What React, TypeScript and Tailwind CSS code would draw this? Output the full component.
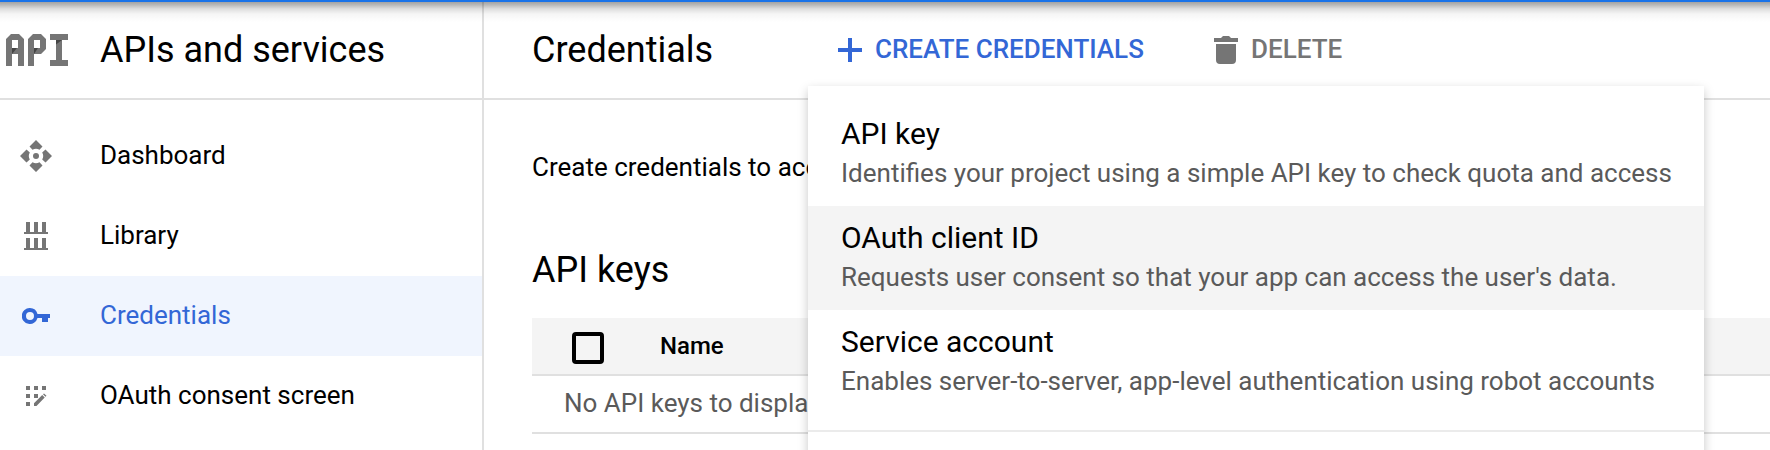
import type { ReactNode } from "react";

function ApiLogo() {
  return (
    <svg width="64" height="32" viewBox="0 0 64 32" className="mr-[30px] shrink-0" fill="#757575">
      <path fillRule="evenodd" d="M0 32V5L5 0h8l5 5v27h-6V20H6v12H0ZM6 6v8h6V6H6Z" />
      <path fillRule="evenodd" d="M22 32V5l5-5h8l5 5v10l-5 5h-7v12h-6ZM28 6v8h6V6h-6Z" />
      <path d="M44 0h18v6h-6v20h6v6H44v-6h6V6h-6V0Z" />
      <path d="M6 20v-6h5L6 20ZM28 20v-6h4L28 20ZM50 6h6l-6 4.500V6Z" fill="#454545" />
    </svg>
  );
}

function DashboardIcon() {
  return (
    <svg width="32" height="32" viewBox="0 0 32 32" fill="#757575">
      {[0, 90, 180, 270].map((angle) => (
        <path
          key={angle}
          transform={`rotate(${angle} 16 16)`}
          d="M16 0l6.500 6.500-3 3.300A7 7 0 0 0 12.500 9.800L9.500 6.500z"
        />
      ))}
      <circle cx="16" cy="16" r="3" />
    </svg>
  );
}

function LibraryIcon() {
  return (
    <svg width="24" height="28" viewBox="0 0 24 28" fill="#757575">
      <path d="M2 0h4v10h4V0h4v10h4V0h4v10h2v2H0v-2h2zM2 16h4v10h4V16h4v10h4V16h4v10h2v2H0v-2h2z" />
    </svg>
  );
}

function KeyIcon() {
  return (
    <svg width="28" height="16" viewBox="0 0 28 16" fill="#3367d6">
      <path fillRule="evenodd" d="M8 0a8 8 0 0 1 7.500 6H28v4h-2v4h-6v-4h-4.500A8 8 0 1 1 8 0Zm0 4a4 4 0 1 0 0 8 4 4 0 0 0 0-8Z" />
    </svg>
  );
}

function ConsentIcon() {
  return (
    <svg width="20" height="20" viewBox="0 0 20 20" className="overflow-visible" fill="#757575">
      <path d="M0 0h4v4H0zM8 0h4v4H8zM16 0h4v4h-4zM0 8h4v4H0zM8 8h4v4H8zM0 16h4v4H0z" />
      <path d="M8 20v-2.700l8.200-8.200 2.500 2.500L10.500 20zM17 8.300l1-.8 2.500 2.300-1 1z" />
    </svg>
  );
}

function TrashIcon() {
  return (
    <svg width="24" height="28" viewBox="0 0 24 28" fill="#757575">
      <path d="M0 2h7l2-2h6l2 2h7v4H0zM2 8h20v16a4 4 0 0 1-4 4H6a4 4 0 0 1-4-4z" />
    </svg>
  );
}

function NavItem({ icon, label, active = false }: { icon: ReactNode; label: string; active?: boolean }) {
  return (
    <a className={`flex h-20 items-center text-[26px] ${active ? "bg-[#f0f5fe] text-[#3367d6]" : "text-black"}`}>
      <span className="ml-4 mr-11 flex w-10 justify-center">{icon}</span>
      <span className="pb-0.5">{label}</span>
    </a>
  );
}

function MenuItem({ title, text, active = false }: { title: string; text: string; active?: boolean }) {
  return (
    <div className={`flex h-[104px] flex-col pt-3 pl-[33px] whitespace-nowrap ${active ? "bg-[#f4f4f4]" : ""}`}>
      <div className="text-[30px] leading-10 text-black">{title}</div>
      <div className="text-[26px] leading-[38px] text-[#5a5a5a]">{text}</div>
    </div>
  );
}

export default function App() {
  return (
    <div className="relative h-[450px] w-full overflow-hidden bg-white font-[Roboto,sans-serif] text-black">
      <div className="flex h-full pt-0.5">
        <aside className="flex w-[484px] shrink-0 flex-col border-r-2 border-[#e0e0e0]">
          <div className="flex h-[98px] items-center border-b-2 border-[#e0e0e0] pl-1.5">
            <ApiLogo />
            <h1 className="text-[36px] leading-none">APIs and services</h1>
          </div>
          <nav className="flex flex-col pt-4">
            <NavItem icon={<DashboardIcon />} label="Dashboard" />
            <NavItem icon={<LibraryIcon />} label="Library" />
            <NavItem icon={<KeyIcon />} label="Credentials" active />
            <NavItem icon={<ConsentIcon />} label="OAuth consent screen" />
          </nav>
        </aside>
        <main className="flex min-w-0 flex-1 flex-col">
          <header className="flex h-[98px] shrink-0 items-center border-b-2 border-[#e0e0e0] pl-12">
            <h2 className="w-[306px] text-[36px] leading-none">Credentials</h2>
            <button className="flex w-[376px] items-center gap-[13px] text-[26px] font-medium whitespace-nowrap text-[#3367d6]">
              <svg width="24" height="24" viewBox="0 0 24 24" fill="#3367d6">
                <path d="M10 0h4v10h10v4H14v10h-4V14H0v-4h10z" />
              </svg>
              <span className="pb-0.5">CREATE CREDENTIALS</span>
            </button>
            <button className="flex items-center gap-[13px] text-[26px] font-medium text-[#757575]">
              <TrashIcon />
              <span className="pb-0.5">DELETE</span>
            </button>
          </header>
          <section className="flex flex-col pl-12">
            <p className="pt-[47px] text-[26px] leading-10 whitespace-nowrap">Create credentials to acc</p>
            <h3 className="pt-[60px] text-[36px] leading-[46px]">API keys</h3>
            <div className="mt-[25px] flex h-[58px] items-center border-b-2 border-[#e0e0e0] bg-[#f4f4f4] pl-10">
              <span className="mt-1 size-8 rounded-[4px] border-4 border-black" />
              <span className="ml-14 text-[24px] font-medium">Name</span>
            </div>
            <div className="flex h-[58px] items-center border-b-2 border-[#e0e0e0] pb-0.5 pl-8 text-[26px] text-[#5a5a5a]">No API keys to display</div>
          </section>
        </main>
      </div>
      <div className="absolute top-[86px] left-[808px] h-[400px] w-[896px] bg-white pt-4 shadow-[0_4px_10px_rgba(0,0,0,0.22)]">
        <MenuItem title="API key" text="Identifies your project using a simple API key to check quota and access" />
        <MenuItem title="OAuth client ID" text="Requests user consent so that your app can access the user's data." active />
        <MenuItem title="Service account" text="Enables server-to-server, app-level authentication using robot accounts" />
        <div className="mt-4 h-0.5 bg-[#ebebeb]" />
      </div>
      <div className="absolute inset-x-0 top-0 h-[22px] border-t-2 border-[#1a73e8] bg-[linear-gradient(to_bottom,rgba(0,0,0,0.36)_0px,rgba(0,0,0,0.27)_3px,rgba(0,0,0,0.13)_7px,rgba(0,0,0,0.04)_12px,rgba(0,0,0,0)_20px)]" />
    </div>
  );
}
